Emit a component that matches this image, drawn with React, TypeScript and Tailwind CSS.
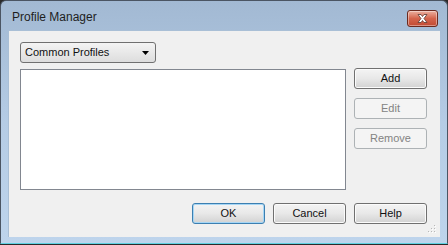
import React from 'react';

const font = { fontFamily: '"Liberation Sans", Arial, sans-serif' };

interface DlgButtonProps {
  label: string;
  disabled?: boolean;
  primary?: boolean;
}

const DlgButton: React.FC<DlgButtonProps> = ({ label, disabled, primary }) => {
  if (disabled) {
    return (
      <button
        disabled
        className="w-[73px] h-[21px] rounded-[3px] border border-[#adb2b5] bg-[#f4f4f4] text-[11px] font-normal text-[#838383] leading-none"
      >
        {label}
      </button>
    );
  }
  return (
    <button
      className={`w-[73px] h-[21px] rounded-[3px] border text-[11px] font-normal text-[#111111] leading-none bg-gradient-to-b from-[#f4f4f4] via-[#e8e8e8] to-[#d2d2d2] ${
        primary ? 'border-[#3c7fb1] shadow-[inset_0_0_0_1px_#a6d6f5]' : 'border-[#707070] shadow-[inset_0_0_0_1px_#fbfbfb]'
      }`}
    >
      {label}
    </button>
  );
};

const Gripper: React.FC = () => (
  <svg width="9" height="9" viewBox="0 0 9 9" className="absolute right-[3px] bottom-[3px]">
    {[
      [7, 1],
      [7, 4],
      [4, 4],
      [7, 7],
      [4, 7],
      [1, 7],
    ].map(([x, y]) => (
      <g key={`${x}-${y}`}>
        <rect x={x} y={y} width="1" height="1" fill="#ffffff" />
        <rect x={x - 1} y={y - 1} width="1" height="1" fill="#b8b8b8" />
      </g>
    ))}
  </svg>
);

const App: React.FC = () => {
  return (
    <div className="w-[448px] h-[245px] bg-[#2a2a2a]" style={font}>
      <div className="w-[448px] h-[244px] flex flex-col rounded-t-[6px] border border-[#4b5563] bg-gradient-to-b from-[#a2b9d3] via-[#b5cce5] to-[#bed4ec] border-b-[#5fd0e0]">
        {/* title bar */}
        <div className="h-[29px] flex items-start justify-between pl-[11px] pr-[9px]">
          <span className="mt-[9px] text-[12px] leading-[14px] text-[#1e1e1e]">Profile Manager</span>
          <button className="mt-[9px] w-[31px] h-[17px] rounded-[3px] border border-[#6b2a1f] bg-gradient-to-b from-[#eab0a0] via-[#d4644c] to-[#c24a32] flex items-center justify-center shadow-[inset_0_0_0_1px_rgba(255,255,255,0.4)]">
            <svg width="11" height="9" viewBox="0 0 11 9">
              <path
                d="M1 0.5 L4 0.5 L5.5 2.5 L7 0.5 L10 0.5 L7 4.5 L10 8.5 L7 8.5 L5.5 6.5 L4 8.5 L1 8.5 L4 4.5 Z"
                fill="#ffffff"
                stroke="#5a3a34"
                strokeWidth="0.8"
              />
            </svg>
          </button>
        </div>

        {/* client area */}
        <div className="relative mx-[7px] h-[207px] bg-[#f0f0f0] border-l border-t border-[#a9bfd6] flex flex-col pl-[11px] pt-[11px]">
          <div className="w-[136px] h-[21px] rounded-[3px] border border-[#707070] bg-gradient-to-b from-[#f4f4f4] to-[#dddddd] flex items-center justify-between pl-[4px] pr-[6px]">
            <span className="text-[11px] leading-none text-[#111111]">Common Profiles</span>
            <svg width="7" height="4" viewBox="0 0 7 4">
              <path d="M0 0 L7 0 L3.5 4 Z" fill="#000000" />
            </svg>
          </div>

          <div className="mt-[6px] flex gap-[8px]">
            <div className="w-[326px] h-[121px] bg-white border border-[#828790]" />
            <div className="-mt-[1px] flex flex-col gap-[9px]">
              <DlgButton label="Add" />
              <DlgButton label="Edit" disabled />
              <DlgButton label="Remove" disabled />
            </div>
          </div>

          <div className="mt-[13px] flex justify-end gap-[8px] pr-[13px]">
            <DlgButton label="OK" primary />
            <DlgButton label="Cancel" />
            <DlgButton label="Help" />
          </div>

          <Gripper />
        </div>
      </div>
    </div>
  );
};

export default App;
